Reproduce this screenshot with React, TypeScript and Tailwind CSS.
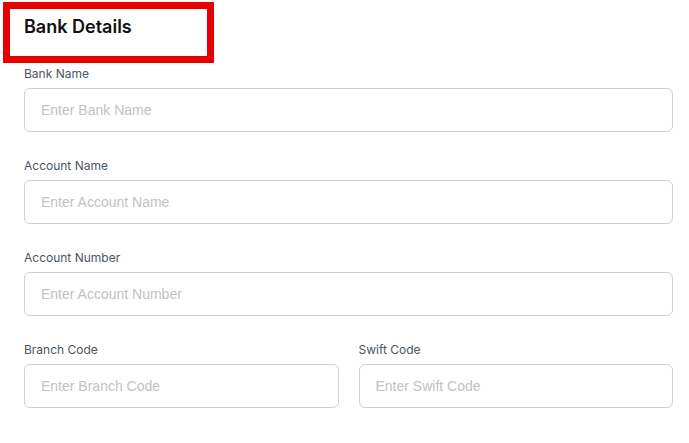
import React from "react";

const inputCls =
  "block w-full h-[44px] rounded-md border border-[#d0d0d0] bg-white px-4 text-[14px] text-[#333] placeholder:text-[#c2c2c2] outline-none [font-family:'Liberation_Sans',Arial,sans-serif]";

function Field({ label, placeholder }: { label: string; placeholder: string }) {
  return (
    <div className="flex flex-col gap-1">
      <label className="text-[12px] leading-5 text-[#4b5563] [font-family:Inter,sans-serif]">{label}</label>
      <input className={inputCls} placeholder={placeholder} />
    </div>
  );
}

export default function App() {
  return (
    <div className="relative min-h-[443px] bg-white pl-6 pr-4 [font-family:Inter,sans-serif]">
      <div className="absolute left-[3px] top-[2px] h-[61px] w-[211px] border-[7px] border-[#e60000]" />
      <div className="h-[64px] pt-[13px]">
        <h2 className="text-[18px] leading-7 font-semibold text-[#111]">Bank Details</h2>
      </div>
      <div className="flex flex-col gap-6">
        <Field label="Bank Name" placeholder="Enter Bank Name" />
        <Field label="Account Name" placeholder="Enter Account Name" />
        <Field label="Account Number" placeholder="Enter Account Number" />
        <div className="grid grid-cols-2 gap-5">
          <Field label="Branch Code" placeholder="Enter Branch Code" />
          <Field label="Swift Code" placeholder="Enter Swift Code" />
        </div>
      </div>
    </div>
  );
}
